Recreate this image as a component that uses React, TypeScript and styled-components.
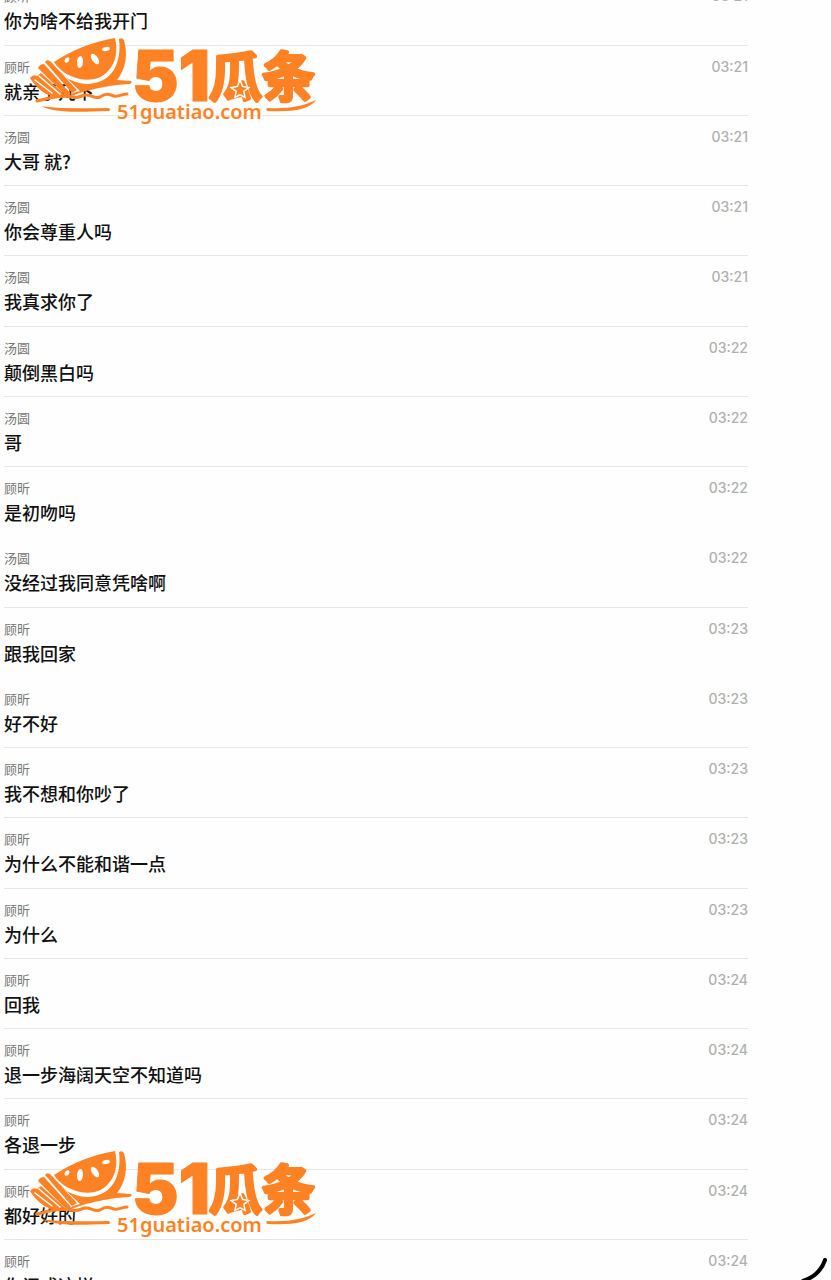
import styled, { createGlobalStyle } from "styled-components"

const GlobalStyle = createGlobalStyle`
  * {
    box-sizing: border-box;
  }

  html {
    overflow: hidden;
  }

  body {
    margin: 0;
    background: #fefefe;
    font-family: Inter, "Noto Sans CJK SC", sans-serif;
  }
`

const Page = styled.main`
  position: relative;
  height: 100vh;
  overflow: hidden;
`

const MessageList = styled.ol`
  display: flex;
  flex-direction: column;
  list-style: none;
  margin: -25px 83px 0 4px;
  padding: 0;
`

const MessageItem = styled.li<{ $divider: boolean }>`
  flex: none;
  padding: 11px 0 12px;
  border-bottom: 1px solid ${(props) => (props.$divider ? "#e6e6e6" : "transparent")};

  &:nth-child(4n + 1) {
    padding-bottom: 13px;
  }
`

const Meta = styled.div`
  display: flex;
  align-items: center;
  justify-content: space-between;
  height: 20px;
`

const Sender = styled.span`
  color: #777;
  font-size: 13px;
  line-height: 20px;
`

const Time = styled.time`
  color: #b0b0b0;
  font-size: 14px;
  font-weight: 500;
  line-height: 20px;
`

const Text = styled.p`
  margin: 0;
  padding-top: 2px;
  color: #111;
  font-family: "Noto Sans CJK SC", sans-serif;
  font-size: 18px;
  font-weight: 500;
  line-height: 24px;
`

const Watermark = styled.svg<{ $top: number }>`
  position: absolute;
  top: ${(props) => props.$top}px;
  left: 26px;
  width: 294px;
  height: 90px;
  pointer-events: none;
`

const Stroke = styled.svg`
  position: absolute;
  top: 1256px;
  right: 0;
  width: 31px;
  height: 26px;
`

interface Message {
  sender: string
  time: string
  text: string
  joined?: boolean
}

const messages: Message[] = [
  { sender: "顾昕", time: "03:21", text: "你为啥不给我开门" },
  { sender: "顾昕", time: "03:21", text: "就亲了几下" },
  { sender: "汤圆", time: "03:21", text: "大哥 就?" },
  { sender: "汤圆", time: "03:21", text: "你会尊重人吗" },
  { sender: "汤圆", time: "03:21", text: "我真求你了" },
  { sender: "汤圆", time: "03:22", text: "颠倒黑白吗" },
  { sender: "汤圆", time: "03:22", text: "哥" },
  { sender: "顾昕", time: "03:22", text: "是初吻吗", joined: true },
  { sender: "汤圆", time: "03:22", text: "没经过我同意凭啥啊" },
  { sender: "顾昕", time: "03:23", text: "跟我回家", joined: true },
  { sender: "顾昕", time: "03:23", text: "好不好" },
  { sender: "顾昕", time: "03:23", text: "我不想和你吵了" },
  { sender: "顾昕", time: "03:23", text: "为什么不能和谐一点" },
  { sender: "顾昕", time: "03:23", text: "为什么" },
  { sender: "顾昕", time: "03:24", text: "回我" },
  { sender: "顾昕", time: "03:24", text: "退一步海阔天空不知道吗" },
  { sender: "顾昕", time: "03:24", text: "各退一步" },
  { sender: "顾昕", time: "03:24", text: "都好好的" },
  { sender: "顾昕", time: "03:24", text: "你闹成这样" },
]

function MelonLogo({ top }: { top: number }) {
  return (
    <Watermark $top={top} viewBox="26 36 294 90" role="img" aria-label="51瓜条 51guatiao.com">
      <g fill="#fd8224">
        {/* flesh */}
        <path d="M54 62C72 50 92 42 115 38C118 51 116 63 108 71C101 79 91 81 80 79C68 76 60 71 54 62Z" />
        {/* rind and the swoosh under it */}
        <path d="M119 39Q122 37 124 40C128 54 126 69 117 80L131 81Q133 83 129 84C112 85 98 88 86 91Q76 94 66 98L73 93L80 91L51 63L53 64C62 78 75 84 88 84C112 83 122 63 119 39Z" />
        {/* side strips */}
        <path d="M45 62Q47 59 50 61L77 90L72 93Z" />
        <path d="M38 68Q40 64 44 64L71 94L66 96Z" />
        <path d="M30 78Q33 74 37 76L41 73L65 95L57 98L46 94Q36 88 30 78Z" />
        <path d="M41 106Q55 109 109 108Q111 110 109 111C76 112 54 113 41 106Z" />
        <path d="M267 108C290 109 303 106 316 100C309 110 292 112 268 111Q265 110 267 108Z" />
      </g>
      <path
        d="M37 101C50 98 60 95 72 97C79 99 81 95 86 95C92 95 94 99 100 97C106 93 109 94 114 96C119 97 122 94 127 94"
        fill="none"
        stroke="#fd8224"
        strokeWidth="3"
        strokeLinecap="round"
      />
      <g fill="#fefefe">
        <ellipse cx="67" cy="60" rx="2" ry="3" transform="rotate(35 67 60)" />
        <ellipse cx="80" cy="62" rx="3" ry="6" transform="rotate(5 80 62)" />
        <ellipse cx="95" cy="59" rx="3" ry="6" transform="rotate(-35 95 59)" />
        <ellipse cx="106" cy="49" rx="4" ry="2" transform="rotate(-12 106 49)" />
      </g>
      <path d="M35 80L52 93M39 76L60 94" fill="none" stroke="#fefefe" strokeWidth="1.5" strokeLinecap="round" />
      <g fill="#fd8224">
        <text x="132" y="101" fontSize="70" fontWeight="900" fontFamily="Inter, sans-serif" stroke="#fd8224" strokeLinejoin="round">
          51
        </text>
        <text
          x="209"
          y="97"
          fontSize="53"
          fontWeight="500"
          fontFamily="'Noto Sans CJK SC', sans-serif"
          stroke="#fd8224"
          strokeWidth="4"
          strokeLinejoin="round"
        >
          瓜条
        </text>
        <text x="117" y="119" fontSize="20" fontWeight="600" fontFamily="'Noto Sans', sans-serif">
          51guatiao.com
        </text>
      </g>
      <path
        d="M240 82L242 87L247 88L243 91L244 96L240 94L236 96L237 91L233 88L238 87Z"
        fill="#fd8224"
        stroke="#fefefe"
        strokeWidth="3"
        paintOrder="stroke"
      />
    </Watermark>
  )
}

export default function App() {
  return (
    <>
      <GlobalStyle />
      <Page>
        <MessageList>
          {messages.map((message, index) => (
            <MessageItem key={index} $divider={!message.joined}>
              <Meta>
                <Sender>{message.sender}</Sender>
                <Time>{message.time}</Time>
              </Meta>
              <Text>{message.text}</Text>
            </MessageItem>
          ))}
        </MessageList>
        <MelonLogo top={36} />
        <MelonLogo top={1149} />
        <Stroke viewBox="800 1256 31 26" aria-hidden="true">
          <path d="M825 1260C822 1269 815 1277 803 1281" fill="none" stroke="#000" strokeWidth="4" strokeLinecap="round" />
        </Stroke>
      </Page>
    </>
  )
}
